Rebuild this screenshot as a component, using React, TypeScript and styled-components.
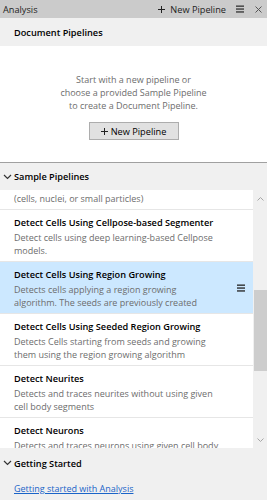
import React, { useLayoutEffect, useRef } from "react";
import styled, { createGlobalStyle } from "styled-components";

const Global = createGlobalStyle`
  html, body { margin: 0; padding: 0; background: #f0f0f0; }
  body { font-family: "Open Sans", "Noto Sans", sans-serif; font-size: 9px; color: #000; }
  * { box-sizing: border-box; }
`;

const Panel = styled.div`
  width: 267px;
  height: 500px;
  display: flex;
  flex-direction: column;
  background: #f0f0f0;
  overflow: hidden;
`;

const TitleBar = styled.div`
  height: 18px;
  flex: none;
  display: flex;
  align-items: center;
  padding: 0 5px 0 3px;
  background: #cbcbcb;
  color: #1e1e1e;
`;

const TitleText = styled.div`
  flex: 1;
  font-size: 9.2px;
`;

const HeaderAction = styled.div`
  display: flex;
  align-items: center;
  gap: 5px;
  font-size: 9.2px;
  margin-right: 10px;
`;

const IconSlot = styled.div<{ $gap?: number }>`
  display: flex;
  align-items: center;
  justify-content: center;
  margin-right: ${(p) => p.$gap ?? 0}px;
`;

const SectionBar = styled.div<{ $height: number; $divider?: boolean }>`
  height: ${(p) => p.$height}px;
  flex: none;
  display: flex;
  align-items: center;
  padding-left: 3px;
  background: #f0f0f0;
  border-top: ${(p) => (p.$divider ? "1px solid #a0a0a0" : "none")};
  font-weight: 600;
  font-size: 9.2px;
  color: #000;
`;

const ChevronSlot = styled.div<{ $hidden?: boolean }>`
  width: 11px;
  display: flex;
  align-items: center;
  visibility: ${(p) => (p.$hidden ? "hidden" : "visible")};
`;

const EmptyState = styled.div`
  height: 116px;
  flex: none;
  background: #fff;
  display: flex;
  flex-direction: column;
  align-items: center;
  padding-top: 27px;
`;

const Message = styled.div`
  text-align: center;
  line-height: 13px;
  color: #6d6d6d;
  font-size: 9px;
`;

const PushButton = styled.button`
  margin-top: 10px;
  width: 90px;
  height: 18px;
  display: flex;
  align-items: center;
  justify-content: center;
  gap: 3px;
  background: #e1e1e1;
  border: 1px solid #adadad;
  font-family: inherit;
  font-size: 9.2px;
  color: #000;
  padding: 0;
`;

const ListArea = styled.div`
  flex: none;
  height: 258px;
  display: flex;
`;

const List = styled.div`
  flex: 1;
  background: #fff;
  overflow: hidden;
`;

const Item = styled.div<{ $selected?: boolean }>`
  display: flex;
  align-items: center;
  padding: 5px 4px 4px 14px;
  border-bottom: 1px solid #e6e6e6;
  background: ${(p) => (p.$selected ? "#cce8ff" : "#fff")};
`;

const ItemText = styled.div`
  flex: 1;
  min-width: 0;
`;

const ItemTitle = styled.div`
  font-weight: 600;
  font-size: 9.2px;
  line-height: 16px;
  color: #000;
  white-space: nowrap;
`;

const ItemDesc = styled.div`
  font-size: 9px;
  line-height: 13px;
  max-height: 26px;
  overflow: hidden;
  white-space: nowrap;
  color: #6d6d6d;
`;

const DescLine = styled.div`
  height: 13px;
`;

const ItemAction = styled.div`
  width: 16px;
  margin-left: auto;
  display: flex;
  justify-content: center;
`;

const ScrollBar = styled.div`
  width: 14px;
  flex: none;
  display: flex;
  flex-direction: column;
  background: #f0f0f0;
`;

const ScrollArrow = styled.div`
  height: 17px;
  flex: none;
  display: flex;
  align-items: center;
  justify-content: center;
`;

const Track = styled.div`
  flex: 1;
  display: flex;
  flex-direction: column;
  align-items: flex-end;
`;

const Thumb = styled.div`
  width: 13px;
  height: 81px;
  background: #cdcdcd;
`;

const LinkRow = styled.div`
  padding: 4px 0 0 14px;
  line-height: 13px;
`;

const Link = styled.a`
  color: #1a64c8;
  text-decoration: underline;
  font-size: 9px;
`;

const Chevron = () => (
  <svg width="9" height="6" viewBox="0 0 9 6">
    <path d="M1 1 L4.5 4.5 L8 1" fill="none" stroke="#333" strokeWidth="1.2" />
  </svg>
);

const Menu = ({ color = "#333" }: { color?: string }) => (
  <svg width="8" height="8" viewBox="0 0 8 8">
    <rect x="0" y="0.5" width="8" height="1.3" fill={color} />
    <rect x="0" y="3.4" width="8" height="1.3" fill={color} />
    <rect x="0" y="6.3" width="8" height="1.3" fill={color} />
  </svg>
);

const Close = () => (
  <svg width="7" height="7" viewBox="0 0 7 7">
    <path d="M0.5 0.5 L6.5 6.5 M6.5 0.5 L0.5 6.5" stroke="#555" strokeWidth="1" />
  </svg>
);

const Plus = () => (
  <svg width="7" height="7" viewBox="0 0 7 7">
    <path d="M3.5 0 V7 M0 3.5 H7" stroke="#222" strokeWidth="1" />
  </svg>
);

const ArrowGlyph = ({ up }: { up?: boolean }) => (
  <svg width="7" height="4" viewBox="0 0 7 4">
    <path d={up ? "M0.5 3.5 L3.5 0.5 L6.5 3.5" : "M0.5 0.5 L3.5 3.5 L6.5 0.5"} fill="none" stroke="#a6a6a6" strokeWidth="1" />
  </svg>
);

type Pipeline = { title: string; lines: string[]; selected?: boolean };

const pipelines: Pipeline[] = [
  {
    title: "Detect Cells",
    lines: ["Detects round blob-like cell markers", "(cells, nuclei, or small particles)"],
  },
  {
    title: "Detect Cells Using Cellpose-based Segmenter",
    lines: ["Detect cells using deep learning-based Cellpose", "models."],
  },
  {
    title: "Detect Cells Using Region Growing",
    lines: [
      "Detects cells applying a region growing",
      "algorithm. The seeds are previously created",
      "using a seed detection.",
    ],
    selected: true,
  },
  {
    title: "Detect Cells Using Seeded Region Growing",
    lines: ["Detects Cells starting from seeds and growing", "them using the region growing algorithm"],
  },
  {
    title: "Detect Neurites",
    lines: ["Detects and traces neurites without using given", "cell body segments"],
  },
  {
    title: "Detect Neurons",
    lines: ["Detects and traces neurons using given cell body", "segments"],
  },
  {
    title: "Detect Nuclei",
    lines: ["Detects nuclei in fluorescence images"],
  },
];

export default function App() {
  const listRef = useRef<HTMLDivElement>(null);
  useLayoutEffect(() => {
    if (listRef.current) listRef.current.scrollTop = 32;
  }, []);
  const thumbOffset = 83;

  return (
    <>
      <Global />
      <Panel>
        <TitleBar>
          <TitleText>Analysis</TitleText>
          <HeaderAction>
            <Plus />
            <span>New Pipeline</span>
          </HeaderAction>
          <IconSlot $gap={11}>
            <Menu />
          </IconSlot>
          <IconSlot>
            <Close />
          </IconSlot>
        </TitleBar>

        <SectionBar $height={28}>
          <ChevronSlot $hidden />
          Document Pipelines
        </SectionBar>

        <EmptyState>
          <Message>
            Start with a new pipeline or
            <br />
            choose a provided Sample Pipeline
            <br />
            to create a Document Pipeline.
          </Message>
          <PushButton>
            <Plus />
            New Pipeline
          </PushButton>
        </EmptyState>

        <SectionBar $height={28} $divider>
          <ChevronSlot>
            <Chevron />
          </ChevronSlot>
          Sample Pipelines
        </SectionBar>

        <ListArea>
          <List ref={listRef}>
            {pipelines.map((p) => (
              <Item key={p.title} $selected={p.selected}>
                <ItemText>
                  <ItemTitle>{p.title}</ItemTitle>
                  <ItemDesc>
                    {p.lines.map((l) => (
                      <DescLine key={l}>{l}</DescLine>
                    ))}
                  </ItemDesc>
                </ItemText>
                {p.selected && (
                  <ItemAction>
                    <Menu color="#222" />
                  </ItemAction>
                )}
              </Item>
            ))}
          </List>
          <ScrollBar>
            <ScrollArrow>
              <ArrowGlyph up />
            </ScrollArrow>
            <Track>
              <Thumb style={{ marginTop: thumbOffset }} />
            </Track>
            <ScrollArrow>
              <ArrowGlyph />
            </ScrollArrow>
          </ScrollBar>
        </ListArea>

        <SectionBar $height={30}>
          <ChevronSlot>
            <Chevron />
          </ChevronSlot>
          Getting Started
        </SectionBar>
        <LinkRow>
          <Link href="#">Getting started with Analysis</Link>
        </LinkRow>
      </Panel>
    </>
  );
}
